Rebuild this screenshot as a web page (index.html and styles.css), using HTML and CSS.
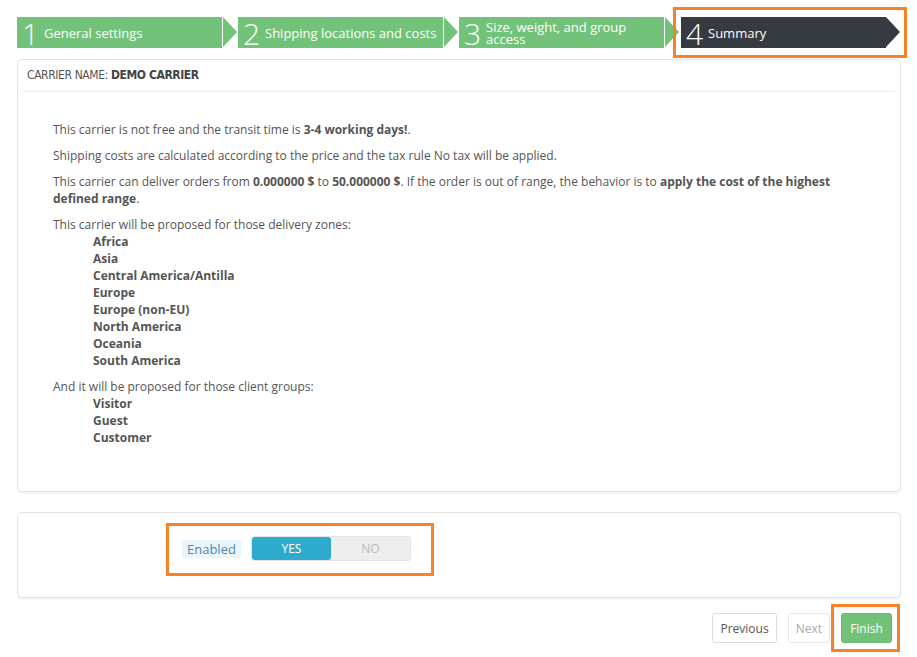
FILE: index.html
```html
<!DOCTYPE html>
<html>
<head>
<meta charset="utf-8">
<link rel="stylesheet" href="styles.css">
</head>
<body>
<div class="page">
  <div class="steps">
    <div class="step done"><span class="num">1</span><span class="lbl">General settings</span></div>
    <div class="step done"><span class="num">2</span><span class="lbl">Shipping locations and costs</span></div>
    <div class="step done"><span class="num">3</span><span class="lbl two">Size, weight, and group access</span></div>
    <div class="step current"><span class="num">4</span><span class="lbl">Summary</span></div>
  </div>

  <div class="panel summary">
    <div class="panel-heading">Carrier name: <b>Demo carrier</b></div>
    <div class="summary-body">
      <p>This carrier is not free and the transit time is <b>3-4 working days!</b>.</p>
      <p>Shipping costs are calculated according to the price and the tax rule No tax will be applied.</p>
      <p>This carrier can deliver orders from <b>0.000000 $</b> to <b>50.000000 $</b>. If the order is out of range, the behavior is to <b>apply the cost of the highest defined range</b>.</p>
      <p class="list-intro">This carrier will be proposed for those delivery zones:</p>
      <ul>
        <li>Africa</li>
        <li>Asia</li>
        <li>Central America/Antilla</li>
        <li>Europe</li>
        <li>Europe (non-EU)</li>
        <li>North America</li>
        <li>Oceania</li>
        <li>South America</li>
      </ul>
      <p class="list-intro">And it will be proposed for those client groups:</p>
      <ul>
        <li>Visitor</li>
        <li>Guest</li>
        <li>Customer</li>
      </ul>
    </div>
  </div>

  <div class="panel status">
    <div class="highlight-row">
      <span class="tip-label">Enabled</span>
      <div class="switch">
        <span class="opt on">YES</span>
        <span class="opt off">NO</span>
      </div>
    </div>
  </div>

  <div class="actions">
    <button class="btn">Previous</button>
    <button class="btn disabled">Next</button>
    <div class="finish-wrap"><button class="btn finish">Finish</button></div>
  </div>
</div>
</body>
</html>
```

FILE: styles.css
```css
*, *::before, *::after { box-sizing: border-box; }
html, body { margin: 0; padding: 0; background: #fff; }
body {
  font-family: "Open Sans", "Liberation Sans", sans-serif;
  font-size: 12px;
  color: #555;
}
.page {
  padding: 17px 16px 0 17px;
  width: 917px;
  min-height: 657px;
}

/* wizard steps */
.steps {
  display: flex;
  height: 31px;
}
.step {
  position: relative;
  width: 205px;
  height: 31px;
  margin-right: 16px;
  display: flex;
  align-items: center;
  color: #fff;
  background: #72c279;
  padding-left: 5px;
}
.step:nth-child(3) { margin-right: 17px; }
.step.current { background: #363a41; margin-right: 0; }
.step::after {
  content: "";
  position: absolute;
  top: 0;
  left: 206px;
  width: 0; height: 0;
  border-top: 15.5px solid transparent;
  border-bottom: 15.5px solid transparent;
  border-left: 14px solid #72c279;
}
.step.current::after { border-left-color: #363a41; left: 205px; }
.step.current::before {
  content: "";
  position: absolute;
  left: -8px; top: -10px;
  width: 234px; height: 51px;
  border: 3px solid #fa8128;
}
.num {
  font-size: 30px;
  font-weight: 300;
  line-height: 31px;
  width: 22px;
  text-align: left;
  position: relative;
  top: 1px;
}
.lbl {
  font-size: 13px;
  line-height: 14px;
}
.lbl.two { line-height: 12px; width: 160px; }

/* panels */
.panel {
  border: 1px solid #e2e2e2;
  border-radius: 5px;
  background: #fff;
  box-shadow: 0 2px 0 rgba(0,0,0,0.04);
}
.summary {
  margin-top: 11px;
  height: 433px;
  padding: 0 5px;
}
.panel-heading {
  font-family: "DejaVu Sans Condensed", "DejaVu Sans", sans-serif;
  font-stretch: condensed;
  text-transform: uppercase;
  font-size: 12px;
  letter-spacing: -0.4px;
  color: #555;
  height: 32px;
  line-height: 31px;
  padding-left: 4px;
  border-bottom: 1px solid #eee;
}
.panel-heading b { color: #444; }
.summary-body {
  padding: 29px 60px 0 30px;
}
.summary-body p {
  margin: 0 0 9px;
  line-height: 17px;
}
.summary-body b { color: #555; font-weight: 700; }
.summary-body p.list-intro { margin-bottom: 0; }
.summary-body ul {
  list-style: none;
  margin: 0 0 9px;
  padding-left: 40px;
}
.summary-body li {
  font-weight: 700;
  line-height: 17px;
}

.status {
  margin-top: 20px;
  height: 86px;
  padding: 10px 0 0 148px;
}
.highlight-row {
  display: inline-flex;
  align-items: center;
  border: 3px solid #fa8128;
  width: 268px;
  height: 53px;
  padding: 0 0 2px 13px;
}
.tip-label {
  background: #eaf5fb;
  color: #4f88ad;
  font-size: 13px;
  padding: 0 5px;
  line-height: 18px;
  height: 18px;
  margin-right: 10px;
  border-radius: 2px;
}
.switch {
  display: flex;
  width: 160px;
  height: 25px;
  border-radius: 3px;
  overflow: hidden;
  background: #eee;
  border: 1px solid #e4e4e4;
}
.opt {
  flex: 1;
  display: flex;
  align-items: center;
  justify-content: center;
  font-size: 12px;
}
.opt.on { background: #2eaacd; color: #fff; border-radius: 3px; }
.opt.off { color: #bbb; }

/* buttons */
.actions {
  display: flex;
  justify-content: flex-end;
  align-items: flex-start;
  gap: 11px;
  padding-right: 9px;
  margin-top: 15px;
}
.btn {
  font-family: "Open Sans", "Liberation Sans", sans-serif;
  font-size: 12px;
  height: 30px;
  padding: 0 7px;
  border: 1px solid #ddd;
  border-radius: 3px;
  background: #fff;
  color: #555;
}
.btn.disabled { color: #aaa; border-color: #e8e8e8; }
.finish-wrap {
  position: relative;
}
.finish-wrap::after {
  content: "";
  position: absolute;
  left: -10px; top: -9px;
  width: 69px; height: 48px;
  border: 3px solid #fa8128;
  pointer-events: none;
}
.btn.finish {
  display: block;
  background: #72c279;
  border-color: #6ab872;
  color: #fff;
  width: 51px;
}
```
